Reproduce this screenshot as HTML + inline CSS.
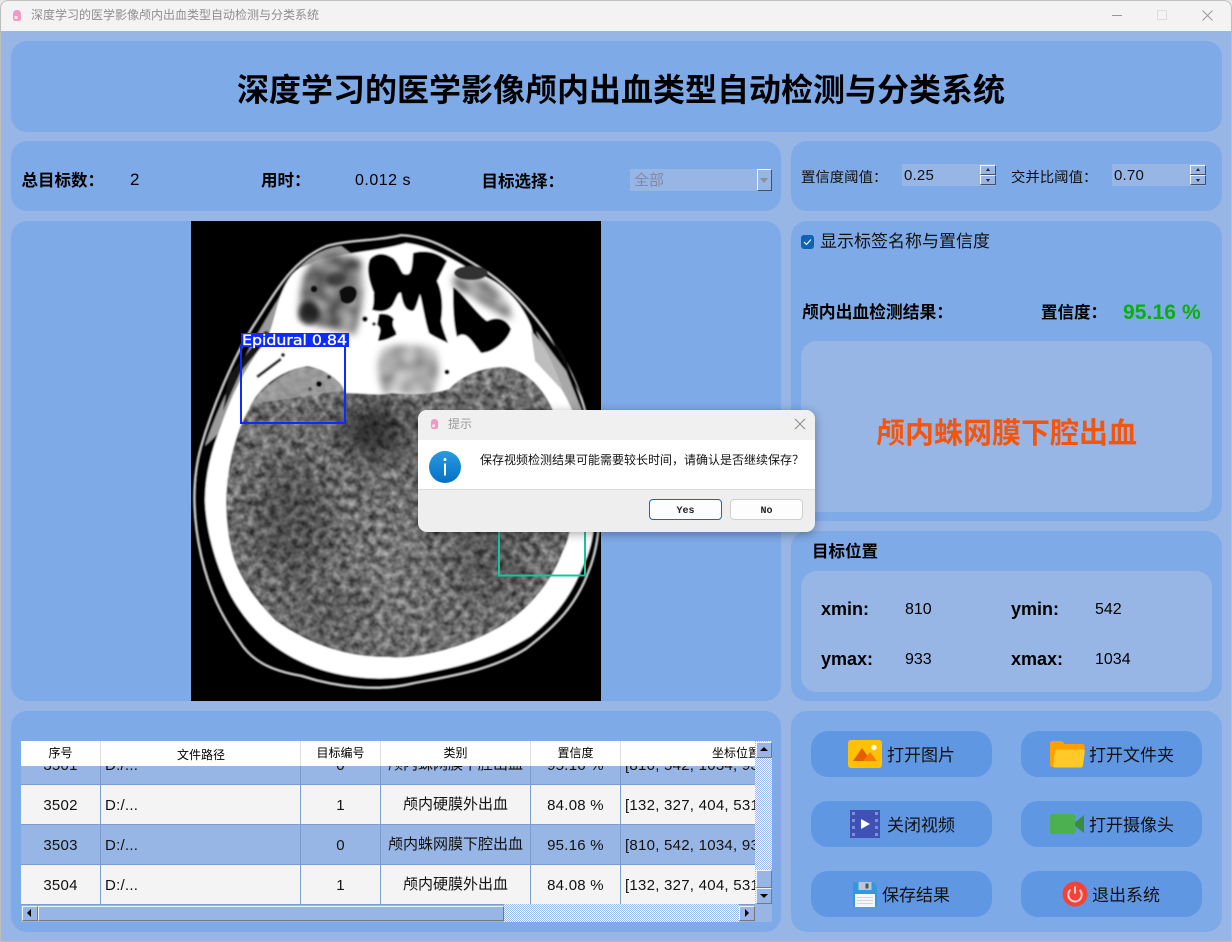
<!DOCTYPE html>
<html lang="zh-CN"><head><meta charset="utf-8"><title>深度学习的医学影像颅内出血类型自动检测与分类系统</title>
<style>
*{box-sizing:border-box;margin:0;padding:0}
html,body{width:1232px;height:942px;overflow:hidden;background:#e8e8e8}
body{position:relative;font-family:"Liberation Sans","Noto Sans CJK SC",sans-serif;color:#000}
div,span.a{position:absolute}
.t{position:absolute;white-space:nowrap;line-height:20px;height:20px}
.c{text-align:center}
.b{font-weight:700}
.col{font-family:"Noto Sans CJK JP",sans-serif}
#win{left:0;top:0;width:1232px;height:942px;background:#97b6e6;border-radius:8px 8px 0 0;border:1px solid #bdbdbd;border-top-color:#c2c2c2;overflow:hidden}
#in{left:-1px;top:-1px;width:1232px;height:942px}
.p{background:#7faae8;border-radius:16px}
.q{background:#97b6e6;border-radius:16px}
.btn{background:#6097e3;border-radius:17px;width:181px;height:46px}
.bt{font-size:17px;line-height:24px;height:24px;white-space:nowrap;position:absolute;color:#111}
.spinb{background:#97b6e6;border:1px solid #f2f6fc;border-right-color:#444f66;border-bottom-color:#444f66}
.spint{position:absolute;width:0;height:0;border-left:2.5px solid transparent;border-right:2.5px solid transparent}
.row{left:21px;width:734px;height:40px;font-size:15px;border-bottom:1px solid #7b9ccf}
.vl{top:0;width:1px;background:#7b9ccf}
.hv{top:741px;width:1px;height:25px;background:#e1e1e1}
.cell{position:absolute;white-space:nowrap;line-height:40px;height:40px;top:1px;letter-spacing:.25px;color:#111}
.sb{background:#97b6e6;border:1px solid #eef3fb;border-right-color:#777;border-bottom-color:#777}
.dbtn{top:499px;width:73px;height:21px;border-radius:4px;background:#fdfdfd;font:10px/21px "Liberation Mono",monospace;font-weight:700;text-align:center;color:#222;padding-top:1px}
</style></head><body>
<div id="win"><div id="in">
<!-- title bar -->
<div style="left:0;top:0;width:1232px;height:31px;background:#f3f3f3"></div>
<svg style="position:absolute;left:12px;top:9px" width="10" height="13" viewBox="0 0 10 13"><path d="M5 1C2 1 1 3 1 6v3c0 2 1 3 2 3h4c1 0 2-1 2-3V6C9 3 8 1 5 1z" fill="#ee9ac2"/><path d="M2.500 7h3v3h-3z" fill="#fbe3ee"/></svg>
<div class="t" style="left:31px;top:5px;font-size:12px;color:#8e8e8e">深度学习的医学影像颅内出血类型自动检测与分类系统</div>
<div style="left:1112px;top:15px;width:10px;height:1px;background:#999"></div>
<div style="left:1157px;top:10px;width:10px;height:10px;border:1px solid #dcdcdc"></div>
<svg style="position:absolute;left:1202px;top:10px" width="11" height="11" viewBox="0 0 11 11"><path d="M.5.5l10 10M10.500.5l-10 10" stroke="#999" fill="none"/></svg>

<!-- panels -->
<div class="p" style="left:11px;top:41px;width:1211px;height:91px"></div>
<div class="p" style="left:11px;top:141px;width:770px;height:70px"></div>
<div class="p" style="left:791px;top:141px;width:431px;height:70px"></div>
<div class="p" style="left:11px;top:221px;width:770px;height:480px"></div>
<div class="p" style="left:791px;top:221px;width:431px;height:300px"></div>
<div class="p" style="left:791px;top:531px;width:431px;height:170px"></div>
<div class="p" style="left:11px;top:711px;width:770px;height:221px"></div>
<div class="p" style="left:791px;top:711px;width:431px;height:221px"></div>

<div class="t b" style="left:0;width:1242px;top:70px;height:40px;line-height:40px;text-align:center;font-size:32px;color:#000">深度学习的医学影像颅内出血类型自动检测与分类系统</div>

<!-- stats -->
<div class="t b" style="left:21.500px;top:168.500px;font-size:16.500px">总目标数<span class="col">：</span></div>
<div class="t" style="left:130px;top:170px;font-size:17px">2</div>
<div class="t b" style="left:261px;top:168.500px;font-size:16.500px">用时<span class="col">：</span></div>
<div class="t" style="left:355px;top:171px;font-size:16px;letter-spacing:.5px">0.012 s</div>
<div class="t b" style="left:481.500px;top:169.500px;font-size:16.500px">目标选择<span class="col">：</span></div>
<div style="left:630px;top:169px;width:142px;height:22px;background:#97b6e6"></div>
<div class="t" style="left:634px;top:171px;font-size:15px;color:#808b9e">全部</div>
<div class="spinb" style="left:757px;top:169px;width:15px;height:22px"></div>
<div class="spint" style="left:760px;top:178px;border-left-width:4px;border-right-width:4px;border-top:5px solid #8d8f95"></div>

<!-- thresholds -->
<div class="t" style="left:801px;top:167px;font-size:14.400px;color:#111">置信度阈值<span class="col">：</span></div>
<div style="left:902px;top:164px;width:94px;height:22px;background:#97b6e6"></div>
<div class="t" style="left:904px;top:166px;font-size:15px;color:#111;letter-spacing:.2px">0.25</div>
<div class="spinb" style="left:980px;top:165px;width:16px;height:10px"></div>
<div class="spinb" style="left:980px;top:175px;width:16px;height:10px"></div>
<div class="spint" style="left:985.500px;top:168px;border-bottom:3px solid #222"></div>
<div class="spint" style="left:985.500px;top:179px;border-top:3px solid #222"></div>
<div class="t" style="left:1011px;top:167px;font-size:14.400px;color:#111">交并比阈值<span class="col">：</span></div>
<div style="left:1112px;top:164px;width:94px;height:22px;background:#97b6e6"></div>
<div class="t" style="left:1114px;top:166px;font-size:15px;color:#111;letter-spacing:.2px">0.70</div>
<div class="spinb" style="left:1190px;top:165px;width:16px;height:10px"></div>
<div class="spinb" style="left:1190px;top:175px;width:16px;height:10px"></div>
<div class="spint" style="left:1195.500px;top:168px;border-bottom:3px solid #222"></div>
<div class="spint" style="left:1195.500px;top:179px;border-top:3px solid #222"></div>

<!-- CT image -->
<svg style="position:absolute;left:191px;top:221px" width="410" height="480" viewBox="0 0 410 480">
<defs>
<filter id="soft" x="0" y="0" width="100%" height="100%"><feGaussianBlur stdDeviation=".8"/></filter>
<filter id="bl" x="-50%" y="-50%" width="200%" height="200%"><feGaussianBlur stdDeviation="14"/></filter>
<filter id="bm" x="-30%" y="-30%" width="160%" height="160%"><feGaussianBlur stdDeviation="2"/></filter>
<filter id="bo" x="0" y="0" width="100%" height="100%"><feGaussianBlur stdDeviation="3.500"/></filter>
<filter id="n" x="0" y="0" width="100%" height="100%" color-interpolation-filters="sRGB"><feTurbulence type="fractalNoise" baseFrequency=".14" numOctaves="3" seed="7"/><feColorMatrix values=".75 0 0 0 .05  .75 0 0 0 .05  .75 0 0 0 .05  0 0 0 0 1"/></filter>
<filter id="n2" x="0" y="0" width="100%" height="100%" color-interpolation-filters="sRGB"><feTurbulence type="fractalNoise" baseFrequency=".08" numOctaves="2" seed="3"/><feColorMatrix values="1.200 0 0 0 -.16  1.200 0 0 0 -.16  1.200 0 0 0 -.16  0 0 0 0 1"/></filter>
<clipPath id="brain"><path d="M58 188C65 170 85 150 116 145C135 148 150 160 155 172C170 172 190 175 200 172C225 175 245 172 258 168C275 150 300 145 316 146C335 150 350 165 360 185C370 210 378 240 380 270C382 300 378 320 372 330C365 350 350 375 325 395C300 415 260 430 225 435C210 437 205 437 198 436C160 437 120 425 85 400C65 380 50 360 42 335C35 310 34 280 36 265C38 240 45 210 58 188Z"/></clipPath>
<clipPath id="lo"><path d="M120 40C132 30 160 32 170 40C176 70 168 100 164 114C150 110 125 106 108 98C108 80 108 60 120 40Z"/></clipPath>
<clipPath id="eth"><path d="M190 128C205 122 235 122 245 130C250 150 246 165 240 175C225 172 208 175 192 172C186 155 186 140 190 128Z"/></clipPath>
<clipPath id="ro"><path d="M262 56C290 50 318 70 322 100C300 92 285 75 262 66Z"/></clipPath>
<pattern id="chk" width="2" height="2" patternUnits="userSpaceOnUse"><rect width="2" height="2" fill="#fff"/><rect width="1" height="1" fill="#97b6e6"/><rect x="1" y="1" width="1" height="1" fill="#97b6e6"/></pattern>
</defs>
<rect width="410" height="480" fill="#000"/>
<g filter="url(#soft)">
<path d="M210 14C240 15 262 30 290 47C320 65 345 95 365 125C385 155 398 190 403 235C412 280 410 320 398 350C385 385 365 405 335 428C300 450 260 455 220 463C190 470 150 468 110 455C80 450 60 440 48 420C30 395 18 370 10 335C2 300 0 260 10 225C20 190 40 140 62 105C85 70 100 40 135 25C160 18 185 20 210 14Z" fill="#000" stroke="#d2d2d2" stroke-width="2"/>
<path d="M100 58C112 38 130 28 150 25L170 40L110 105L70 135L30 210L14 225C28 180 60 120 100 58Z" fill="#9a9a9a"/>
<path d="M345 110L375 150L395 200L398 235L372 180Z" fill="#a8a8a8"/>
<path d="M355 108L372 132L392 178L378 152Z" fill="#111"/>
<path d="M74 110L82 112L50 150L32 190L38 155Z" fill="#151515"/>
<path d="M125 40C160 30 190 30 215 22C240 25 262 38 285 52C310 60 330 80 340 105C345 125 350 140 365 160C380 180 392 215 396 240C408 280 405 320 392 345C380 375 365 395 340 415C300 440 260 447 220 455C190 460 150 458 115 443C85 430 60 410 40 375C25 345 15 310 14 280C14 255 20 230 30 205C40 175 55 145 75 120C85 100 85 75 100 55C108 45 115 45 125 40Z" fill="#fff"/>
<path d="M66 156L90 138" stroke="#222" stroke-width="3" fill="none"/><circle cx="92" cy="134" r="2" fill="#111"/>
<!-- orbits -->
<g filter="url(#bo)"><rect width="410" height="480" filter="url(#n2)" clip-path="url(#lo)"/></g>
<ellipse cx="118" cy="92" rx="10" ry="12" fill="#111" opacity=".7" filter="url(#bm)"/>
<circle cx="123" cy="68" r="3.500" fill="#111"/>
<ellipse cx="145" cy="58" rx="10" ry="7" fill="#222" opacity=".6" filter="url(#bm)"/>
<path d="M148 70C155 62 166 64 166 72C165 82 156 86 150 80Z" fill="#111"/>
<g filter="url(#bo)"><rect width="410" height="480" filter="url(#n2)" clip-path="url(#ro)" opacity=".8"/></g>
<ellipse cx="280" cy="52" rx="17" ry="7" fill="#333"/>
<path d="M262 66C270 70 285 92 296 100C306 95 316 98 320 108C316 122 300 132 290 132C282 122 275 108 266 116C262 100 262 80 262 66Z" fill="#020202"/>
<path d="M340 110C352 122 360 135 372 170L344 140Z" fill="#bdbdbd"/>
<!-- central sinus -->
<path d="M179 38C185 32 192 31 202 37C208 42 210 52 213 53C220 55 221 50 222 32C232 29 246 30 256 40L246 60C252 72 252 88 250 100C252 110 256 118 257 122C248 118 240 114 238 112C234 100 232 85 229 73C227 80 224 90 222 90C215 90 212 85 210 72C206 70 204 84 199 87C192 92 186 90 181 89C184 80 182 74 183 72C178 60 175 48 179 38Z" fill="#000"/>
<path d="M188 93C195 92 200 94 203 98C199 106 207 110 205 114C198 118 192 120 187 120C188 112 192 108 186 104Z" fill="#000"/>
<circle cx="174" cy="98" r="2.800" fill="#000"/><circle cx="183" cy="103" r="1.800" fill="#111"/>
<g filter="url(#bo)"><rect width="410" height="480" filter="url(#n2)" clip-path="url(#eth)" opacity=".6"/></g>
<!-- brain -->
<rect width="410" height="480" filter="url(#n)" clip-path="url(#brain)"/>
<g clip-path="url(#brain)">
<ellipse cx="183" cy="210" rx="34" ry="26" fill="#000" opacity=".6" filter="url(#bl)"/>
<ellipse cx="100" cy="300" rx="40" ry="60" fill="#000" opacity=".25" filter="url(#bl)"/>
<ellipse cx="300" cy="340" rx="40" ry="40" fill="#000" opacity=".2" filter="url(#bl)"/>
<ellipse cx="140" cy="390" rx="45" ry="26" fill="#000" opacity=".14" filter="url(#bl)"/>
<ellipse cx="200" cy="360" rx="20" ry="60" fill="#fff" opacity=".08" filter="url(#bl)"/>
</g>
<path d="M60 183C75 165 95 148 116 146C135 148 150 160 154 170C125 172 100 178 60 183Z" fill="#a8a8a8" opacity=".75"/>
<circle cx="128" cy="163" r="3" fill="#050505"/><circle cx="138" cy="156" r="2" fill="#222"/><circle cx="119" cy="168" r="2" fill="#555"/>
<circle cx="48" cy="219" r="2.500" fill="#333"/><circle cx="256" cy="151" r="2.500" fill="#050505"/>
</g>
<rect x="50" y="125" width="104" height="77" fill="none" stroke="#0a2cff" stroke-width="2"/>
<rect x="50" y="112" width="108" height="14" fill="#0a2cff"/>
<text x="51" y="124" font-family="DejaVu Sans" font-size="14.500" fill="#fff" stroke="#fff" stroke-width=".35" textLength="105" lengthAdjust="spacingAndGlyphs">Epidural 0.84</text>
<path d="M308 300V354.500H394V300" fill="none" stroke="#10c8a0" stroke-width="2"/>
</svg>

<!-- right middle -->
<div style="left:801px;top:235px;width:13px;height:14px;border-radius:3px;background:#0f62b8"></div>
<svg style="position:absolute;left:803px;top:238px" width="9" height="8" viewBox="0 0 9 8"><path d="M1 4l2.500 2.500L8 1.500" fill="none" stroke="#fff" stroke-width="1.100"/></svg>
<div class="t" style="left:820px;top:232px;font-size:17px;color:#111">显示标签名称与置信度</div>
<div class="t b" style="left:802px;top:301px;font-size:16.800px">颅内出血检测结果<span class="col">：</span></div>
<div class="t b" style="left:1041px;top:300.500px;font-size:16.500px">置信度<span class="col">：</span></div>
<div class="t b" style="left:1123px;top:303px;font-size:21px;letter-spacing:.1px;color:#0aaf0a">95.16 %</div>
<div class="q" style="left:801px;top:341px;width:411px;height:171px"></div>
<div class="t b" style="left:801px;width:411px;top:414px;height:40px;line-height:40px;text-align:center;font-size:29px;color:#f4550c">颅内蛛网膜下腔出血</div>

<div class="t b" style="left:812px;top:542px;font-size:16.500px">目标位置</div>
<div class="q" style="left:801px;top:571px;width:411px;height:121px"></div>
<div class="t b" style="left:821px;top:599px;font-size:18px">xmin:</div>
<div class="t" style="left:905px;top:600px;font-size:16px">810</div>
<div class="t b" style="left:1011px;top:599px;font-size:18px">ymin:</div>
<div class="t" style="left:1095px;top:600px;font-size:16px">542</div>
<div class="t b" style="left:821px;top:649px;font-size:18px">ymax:</div>
<div class="t" style="left:905px;top:650px;font-size:16px">933</div>
<div class="t b" style="left:1011px;top:649px;font-size:18px">xmax:</div>
<div class="t" style="left:1095px;top:650px;font-size:16px">1034</div>

<!-- table -->
<div style="left:21px;top:741px;width:751px;height:181px;background:#97b6e6"></div>
<div class="row" style="top:745px;background:#97b6e6"><div class="cell c" style="left:0;width:79px">3501</div><div class="cell" style="left:84px">D:/...</div><div class="cell c" style="left:280px;width:79px">0</div><div class="cell c" style="left:360px;width:149px;letter-spacing:0;top:0">颅内蛛网膜下腔出血</div><div class="cell c" style="left:510px;width:89px">95.16 %</div><div class="cell" style="left:604px;width:130px;overflow:hidden">[810, 542, 1034, 933]</div></div>
<div class="row" style="top:785px;background:#f4f4f4"><div class="cell c" style="left:0;width:79px">3502</div><div class="cell" style="left:84px">D:/...</div><div class="cell c" style="left:280px;width:79px">1</div><div class="cell c" style="left:360px;width:149px;letter-spacing:0;top:0">颅内硬膜外出血</div><div class="cell c" style="left:510px;width:89px">84.08 %</div><div class="cell" style="left:604px;width:130px;overflow:hidden">[132, 327, 404, 531]</div></div>
<div class="row" style="top:825px;background:#97b6e6"><div class="cell c" style="left:0;width:79px">3503</div><div class="cell" style="left:84px">D:/...</div><div class="cell c" style="left:280px;width:79px">0</div><div class="cell c" style="left:360px;width:149px;letter-spacing:0;top:0">颅内蛛网膜下腔出血</div><div class="cell c" style="left:510px;width:89px">95.16 %</div><div class="cell" style="left:604px;width:130px;overflow:hidden">[810, 542, 1034, 933]</div></div>
<div class="row" style="top:865px;background:#f4f4f4"><div class="cell c" style="left:0;width:79px">3504</div><div class="cell" style="left:84px">D:/...</div><div class="cell c" style="left:280px;width:79px">1</div><div class="cell c" style="left:360px;width:149px;letter-spacing:0;top:0">颅内硬膜外出血</div><div class="cell c" style="left:510px;width:89px">84.08 %</div><div class="cell" style="left:604px;width:130px;overflow:hidden">[132, 327, 404, 531]</div></div>
<div class="vl" style="left:100px;top:766px;height:138px"></div>
<div class="vl" style="left:300px;top:766px;height:138px"></div>
<div class="vl" style="left:380px;top:766px;height:138px"></div>
<div class="vl" style="left:530px;top:766px;height:138px"></div>
<div class="vl" style="left:620px;top:766px;height:138px"></div>
<div style="left:21px;top:741px;width:734px;height:25px;background:#fff;overflow:hidden;font-size:12px">
<div class="t c" style="left:0;width:79px;top:2px">序号</div>
<div class="t c" style="left:80px;width:200px;top:4px">文件路径</div>
<div class="t c" style="left:280px;width:79px;top:2px">目标编号</div>
<div class="t c" style="left:360px;width:149px;top:2px">类别</div>
<div class="t c" style="left:510px;width:89px;top:2px">置信度</div>
<div class="t" style="left:691px;top:2px">坐标位置</div>
</div>
<div class="hv" style="left:100px"></div><div class="hv" style="left:300px"></div><div class="hv" style="left:380px"></div><div class="hv" style="left:530px"></div><div class="hv" style="left:620px"></div>
<!-- scroll tracks -->
<svg style="position:absolute;left:0;top:0" width="1232" height="942" shape-rendering="crispEdges"><rect x="755" y="741" width="17" height="163" fill="url(#chk)"/><rect x="504" y="904" width="235" height="18" fill="url(#chk)"/></svg>
<!-- v scrollbar -->
<div class="sb" style="left:756px;top:742px;width:16px;height:16px"></div>
<div class="spint" style="left:760px;top:747px;border-left-width:4px;border-right-width:4px;border-bottom:4px solid #000"></div>
<div class="sb" style="left:756px;top:870px;width:16px;height:18px"></div>
<div class="sb" style="left:756px;top:888px;width:16px;height:16px"></div>
<div class="spint" style="left:760px;top:894px;border-left-width:4px;border-right-width:4px;border-top:4px solid #000"></div>
<!-- h scrollbar -->
<div class="sb" style="left:22px;top:906px;width:16px;height:15px"></div>
<div class="spint" style="left:27px;top:909px;border-top:4px solid transparent;border-bottom:4px solid transparent;border-left:0;border-right:4px solid #000"></div>
<div class="sb" style="left:38px;top:906px;width:466px;height:15px"></div>
<div class="sb" style="left:739px;top:906px;width:16px;height:15px"></div>
<div class="spint" style="left:745px;top:909px;border-top:4px solid transparent;border-bottom:4px solid transparent;border-right:0;border-left:4px solid #000"></div>

<!-- buttons -->
<div class="btn" style="left:811px;top:731px"></div>
<div class="btn" style="left:1021px;top:731px"></div>
<div class="btn" style="left:811px;top:801px"></div>
<div class="btn" style="left:1021px;top:801px"></div>
<div class="btn" style="left:811px;top:871px"></div>
<div class="btn" style="left:1021px;top:871px"></div>
<div class="bt" style="left:887px;top:744px">打开图片</div>
<div class="bt" style="left:1089px;top:744px">打开文件夹</div>
<div class="bt" style="left:887px;top:814px">关闭视频</div>
<div class="bt" style="left:1089px;top:814px">打开摄像头</div>
<div class="bt" style="left:882px;top:884px">保存结果</div>
<div class="bt" style="left:1092px;top:884px">退出系统</div>

<svg style="position:absolute;left:848px;top:740px" width="34" height="28" viewBox="0 0 34 28"><rect width="34" height="28" rx="3" fill="#ffc107"/><path d="M5 21L14 8l9 13z" fill="#e65c00"/><path d="M15 21l7-9 7 9z" fill="#f57c00"/><circle cx="26" cy="7.500" r="2.700" fill="#fff6d5"/></svg>
<svg style="position:absolute;left:1050px;top:741px" width="35" height="27" viewBox="0 0 35 27"><path d="M3 0h8c1.500 0 2.500 1 3.500 3h17.500c1.500 0 2.500 1 2.500 2.500V10H7L4 26H2.500C1 26 0 25 0 23V3C0 1 1 0 3 0z" fill="#ffa000"/><path d="M7 8.500h26c1.200 0 2 .8 1.800 2L33 24c-.2 1.500-1 2.500-2.500 2.500H5C3.500 26.500 3 25.500 3.300 24L5 10.500C5.200 9.200 6 8.500 7 8.500z" fill="#ffca28"/></svg>
<svg style="position:absolute;left:850px;top:810px" width="30" height="28" viewBox="0 0 30 28"><rect width="30" height="28" fill="#3f51b5"/><g fill="#7e8fdc"><rect x="2" y="2" width="3" height="3"/><rect x="2" y="9" width="3" height="3"/><rect x="2" y="16" width="3" height="3"/><rect x="2" y="23" width="3" height="3"/><rect x="25" y="2" width="3" height="3"/><rect x="25" y="9" width="3" height="3"/><rect x="25" y="16" width="3" height="3"/><rect x="25" y="23" width="3" height="3"/></g><path d="M11 9l9 5-9 5z" fill="#fff"/></svg>
<svg style="position:absolute;left:1050px;top:814px" width="34" height="20" viewBox="0 0 34 20"><rect width="25.500" height="20" rx="3" fill="#4caf50"/><path d="M25 8.500L34 1v18l-9-7z" fill="#388e3c"/></svg>
<svg style="position:absolute;left:853px;top:882px" width="24" height="25" viewBox="0 0 24 25"><path d="M0 1.500C0 .5.500 0 1.500 0H20l4 4v21H2c-1 0-2-.5-2-1.500z" fill="#3498db"/><rect x="5.500" y="0" width="13" height="8" fill="#bdc7cf"/><rect x="12.500" y="1.500" width="3" height="5" fill="#4a5560"/><rect x="2" y="12" width="20" height="13" fill="#f4f6f8"/><path d="M4 15.500h16M4 18.500h16M4 21.500h16" stroke="#cfd6dc"/></svg>
<svg style="position:absolute;left:1062px;top:881px" width="26" height="26" viewBox="0 0 26 26"><circle cx="13" cy="13" r="12.500" fill="#f44336"/><path d="M8.500 8.800a6.700 6.700 0 1 0 9 0" fill="none" stroke="#ffcdd2" stroke-width="2"/><path d="M13 5.500v7" stroke="#ffcdd2" stroke-width="2"/></svg>

<!-- dialog -->
<div style="left:418px;top:410px;width:397px;height:122px;border-radius:9px;overflow:hidden;box-shadow:0 2px 10px rgba(0,0,0,.35);background:#eee">
<div style="left:0;top:0;width:397px;height:30px;background:#f0f0f0"></div>
<div style="left:0;top:30px;width:397px;height:49px;background:#fff"></div>
<div style="left:0;top:79px;width:397px;height:1px;background:#dcdcdc"></div>
</div>
<svg style="position:absolute;left:430px;top:418px" width="9" height="12" viewBox="0 0 10 13"><path d="M5 1C2 1 1 3 1 6v3c0 2 1 3 2 3h4c1 0 2-1 2-3V6C9 3 8 1 5 1z" fill="#ee9ac2"/><path d="M2.500 7h3v3h-3z" fill="#fbe3ee"/></svg>
<div class="t" style="left:448px;top:414px;font-size:12px;color:#999">提示</div>
<svg style="position:absolute;left:794px;top:418px" width="12" height="12" viewBox="0 0 12 12"><path d="M1 1l10 10M11 1L1 11" stroke="#8a8a8a" fill="none"/></svg>
<svg style="position:absolute;left:429px;top:451px" width="32" height="32" viewBox="0 0 32 32"><defs><linearGradient id="ig" x1="0" y1="0" x2="0" y2="1"><stop offset="0" stop-color="#2a9ae0"/><stop offset="1" stop-color="#0670c6"/></linearGradient></defs><circle cx="16" cy="16" r="16" fill="url(#ig)"/><circle cx="16" cy="8.500" r="1.500" fill="#fff"/><rect x="15" y="12.500" width="2" height="12" fill="#fff"/></svg>
<div class="t" style="left:480px;top:450px;font-size:12px;color:#111">保存视频检测结果可能需要较长时间，请确认是否继续保存？</div>
<div class="dbtn" style="left:649px;border:1px solid #0f6cbd">Yes</div>
<div class="dbtn" style="left:730px;border:1px solid #cfcfcf">No</div>
</div></div>
</body></html>
